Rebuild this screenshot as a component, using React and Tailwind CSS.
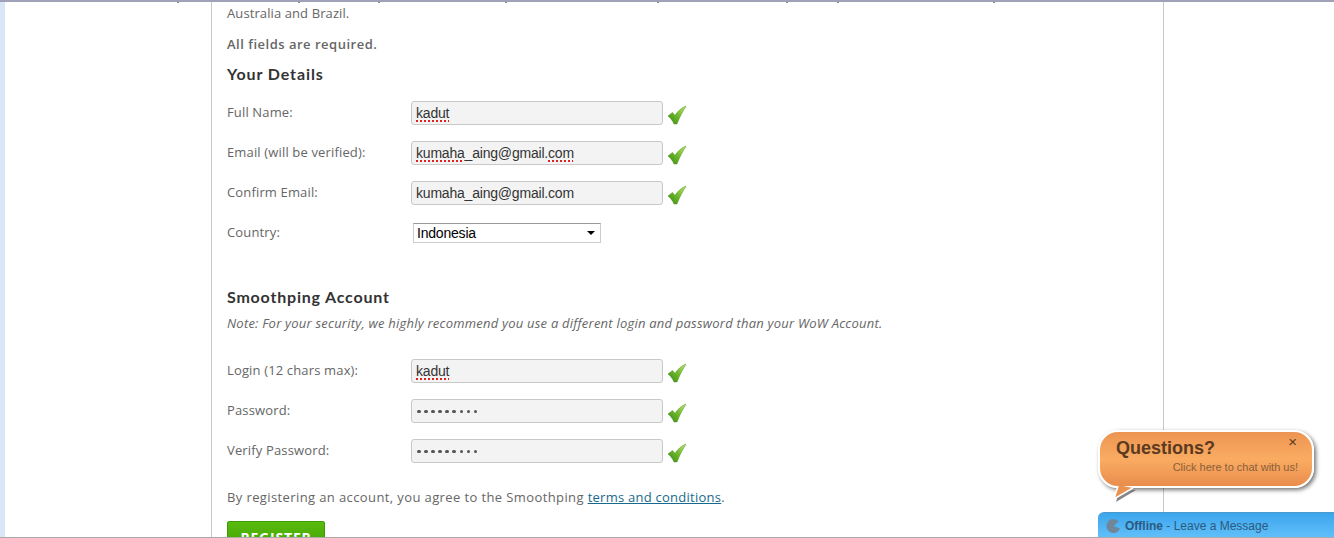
import React from 'react';

const body = { fontFamily: '"Open Sans", sans-serif' };
const arial = { fontFamily: '"Liberation Sans", sans-serif' };
const heading = { fontFamily: 'Lato, sans-serif' };

// bits of the line above that got cut off by the window edge
const ticks = [177, 298, 378, 505, 657, 786, 837, 993];

const Check = () => (
  <svg width="20" height="20" viewBox="0 0 20 20" className="ml-[4px] mt-[4px] shrink-0">
    <defs>
      <linearGradient id="chk" x1="1" y1="0" x2="0" y2="1">
        <stop offset="0" stopColor="#c4e86a" />
        <stop offset="0.5" stopColor="#6db82c" />
        <stop offset="1" stopColor="#3a8a10" />
      </linearGradient>
    </defs>
    <path d="M1 11 L5.5 7.5 L8 10.5 C10.5 6.5 14 3 19 1 C16 6 12.5 12 10 19 L7 19 C5.5 15.5 3.5 13 1 11 Z" fill="url(#chk)" stroke="#4a8a1c" strokeWidth="0.5" />
  </svg>
);

const Field = ({ label, value, password }) => (
  <div className="flex h-[40px] items-start">
    <label className="w-[184px] pt-[1px] text-[13px] leading-[20px] tracking-[0.15px] text-[#666]">{label}</label>
    <div className="flex h-[24px] w-[252px] items-center rounded-[3px] border border-[#c8c8c8] bg-[#f3f3f3] pl-[4px] pt-[1px] text-[14px] tracking-[-0.2px] text-[#333]" style={arial}>
      {password ? (
        <span className="flex gap-[3.6px] pl-[1px]">
          {Array.from({ length: 9 }).map((_, i) => (
            <span key={i} className="h-[3.5px] w-[3.5px] rounded-full bg-[#555]" />
          ))}
        </span>
      ) : (
        <span>{value}</span>
      )}
    </div>
    <Check />
  </div>
);

const squiggle = 'underline decoration-dotted decoration-[#d22] decoration-2 underline-offset-2';

export default function App() {
  return (
    <div className="relative flex h-[538px] w-full overflow-hidden bg-white" style={body}>
      <div className="w-[5px] shrink-0 bg-[#d9e6f6]" />
      <div className="ml-[206px] h-full w-[953px] shrink-0 border-x border-[#c8c8c8] pl-[15px]">
        <p className="pt-[4px] text-[13px] leading-[18px] tracking-[0.1px] text-[#666]">Australia and Brazil.</p>
        <p className="mt-[13px] text-[13px] font-semibold leading-[18px] tracking-[0.5px] text-[#666]">All fields are required.</p>
        <h2 className="mt-[10px] text-[16px] font-bold leading-[22px] tracking-[0.9px] text-[#333]" style={heading}>Your Details</h2>

        <div className="mt-[16px]">
          <Field label="Full Name:" value={<span className={squiggle}>kadut</span>} />
          <Field label="Email (will be verified):" value={<><span className={squiggle}>kumaha</span>_aing@gmail.<span className={squiggle}>com</span></>} />
          <Field label="Confirm Email:" value="kumaha_aing@gmail.com" />
          <div className="flex h-[40px] items-start">
            <label className="w-[184px] pt-[1px] text-[13px] leading-[20px] tracking-[0.15px] text-[#666]">Country:</label>
            <div className="ml-[2px] mt-[2px] flex h-[20px] w-[188px] items-center justify-between border border-[#ccc] border-t-[#999] bg-white pl-[3px] pr-[5px] text-[14px] tracking-[-0.2px] text-black" style={arial}>
              Indonesia
              <span className="h-0 w-0 border-x-[4px] border-t-[4px] border-x-transparent border-t-black" />
            </div>
          </div>
        </div>

        <h2 className="mt-[25px] text-[16px] font-bold leading-[22px] tracking-[0.8px] text-[#333]" style={heading}>Smoothping Account</h2>
        <p className="mt-[7px] text-[13px] italic leading-[16px] tracking-[0.22px] text-[#666]">Note: For your security, we highly recommend you use a different login and password than your WoW Account.</p>

        <div className="mt-[28px]">
          <Field label="Login (12 chars max):" value={<span className={squiggle}>kadut</span>} />
          <Field label="Password:" password />
          <Field label="Verify Password:" password />
        </div>

        <p className="mt-[9px] text-[13px] leading-[18px] tracking-[0.39px] text-[#666]">
          By registering an account, you agree to the Smoothping <a className="tracking-[0.25px] text-[#176a8c] underline">terms and conditions</a>.
        </p>
        <button className="mt-[15px] h-[32px] w-[98px] rounded-[2px] border border-[#3f9a08] bg-gradient-to-b from-[#58bb0c] to-[#3f9e04] text-[14px] font-bold tracking-[0.8px] text-white">REGISTER</button>
      </div>

      {/* chat widget */}
      <svg width="34" height="20" viewBox="0 0 34 20" className="absolute left-[1110px] top-[484px] z-10">
        <path d="M10 4 L6 18 L26 6 Z" fill="#555" opacity="0.7" />
        <path d="M8 1 L4 15 L23 4 Z" fill="#ec9250" />
        <path d="M8 2 L4 15 L23 4" fill="none" stroke="#fff" strokeWidth="1.5" />
      </svg>
      <div className="absolute left-[1098px] top-[430px] h-[58px] w-[216px] rounded-[20px] border-2 border-white bg-gradient-to-b from-[#ec9452] via-[#faac62] to-[#e98d4d] shadow-[2px_2px_4px_rgba(0,0,0,0.55)]" style={arial}>
        <div className="pl-[16px] pt-[5px] text-[18px] font-bold leading-[22px] text-[#5b3a20]">Questions?</div>
        <div className="pr-[14px] pt-[1px] text-right text-[11px] leading-[14px] text-[#8a5f3a]">Click here to chat with us!</div>
        <div className="absolute right-[15px] top-[3px] text-[15px] leading-[14px] text-[#5b3a20]">×</div>
      </div>
      <div className="absolute left-[1098px] top-[512px] flex h-[26px] w-[236px] items-center rounded-tl-[6px] border-t border-[#4a9ad0] bg-gradient-to-b from-[#3aa5ec] to-[#62c0fa] pl-[8px] text-[12px] text-[#2b5a80]" style={arial}>
        <svg width="14" height="14" viewBox="0 0 14 14" className="mr-[5px]">
          <path d="M7 0 A7 7 0 1 0 14 9.5 L7.5 7 L12.5 2.5 A7 7 0 0 0 7 0 Z" fill="#6f8799" />
        </svg>
        <span className="font-bold">Offline</span>&nbsp;- Leave a Message
      </div>

      {ticks.map((x) => (
        <span key={x} className="absolute top-[2px] h-[1px] w-[2px] bg-[#888]" style={{ left: x }} />
      ))}
      <div className="absolute inset-x-0 top-0 h-[2px] bg-[#a0a0b8]" />
      <div className="absolute inset-x-0 bottom-0 h-[1px] bg-[#aaa]" />
    </div>
  );
}
